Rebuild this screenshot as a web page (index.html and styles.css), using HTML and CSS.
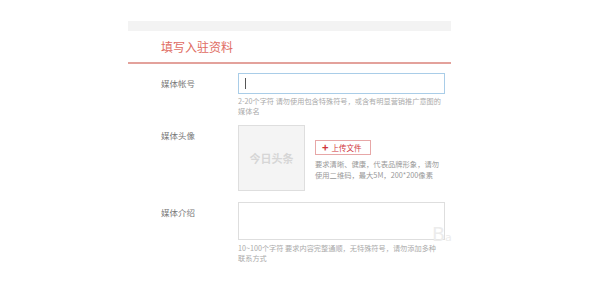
FILE: index.html
```html
<!DOCTYPE html>
<html lang="zh-CN">
<head>
    <meta charset="UTF-8">
    <title>填写入驻资料</title>
    <link rel="stylesheet" href="styles.css">
</head>
<body>
    <div class="panel">
        <div class="top-strip"></div>
        <h2 class="panel-title">填写入驻资料</h2>

        <div class="form-row account-row">
            <label class="form-label">媒体帐号</label>
            <div class="form-field">
                <div class="text-input focused"><span class="caret"></span></div>
                <p class="hint">2-20个字符 请勿使用包含特殊符号，或含有明显营销推广意图的<br>媒体名</p>
            </div>
        </div>

        <div class="form-row avatar-row">
            <label class="form-label">媒体头像</label>
            <div class="form-field avatar-field">
                <div class="avatar-box">今日头条</div>
                <div class="avatar-side">
                    <span class="upload-button"><b>+</b> 上传文件</span>
                    <p class="hint dark">要求清晰、健康，代表品牌形象，请勿<br>使用二维码，最大5M，200*200像素</p>
                </div>
            </div>
        </div>

        <div class="form-row intro-row">
            <label class="form-label">媒体介绍</label>
            <div class="form-field">
                <div class="text-area"></div>
                <p class="hint">10~100个字符 要求内容完整通顺，无特殊符号，请勿添加多种<br>联系方式</p>
            </div>
        </div>

        <div class="watermark">B<span>a</span></div>
    </div>
</body>
</html>
```

FILE: styles.css
```css
* {
    margin: 0;
    padding: 0;
    box-sizing: border-box;
}
body {
    background-color: #fff;
    font-family: "Noto Sans CJK SC", "Liberation Sans", sans-serif;
    color: #666;
}
.panel {
    position: relative;
    width: 323px;
    margin: 21px 0 0 128px;
}
.top-strip {
    height: 10px;
    background-color: #f3f3f3;
}
.panel-title {
    font-size: 12px;
    font-weight: normal;
    color: #e06b61;
    line-height: 16px;
    padding: 8px 0 7px 33px;
    border-bottom: 2px solid #e3a19b;
}
.form-row {
    display: flex;
    padding-left: 33px;
}
.account-row {
    margin-top: 9px;
}
.form-label {
    width: 77px;
    flex: none;
    font-size: 8.5px;
    color: #777;
    line-height: 12px;
    padding-top: 4px;
}
.form-field {
    width: 207px;
}
.text-input {
    height: 21px;
    border: 1px solid #a9cde8;
    padding: 4px 6px;
}
.caret {
    display: block;
    width: 1px;
    height: 11px;
    background-color: #555;
}
.hint {
    font-size: 7.2px;
    line-height: 10px;
    color: #aaa;
    margin-top: 2px;
}
.hint.dark {
    color: #999;
    font-size: 7.3px;
    line-height: 11px;
    margin-top: 4px;
}
.avatar-row {
    margin-top: 9px;
}
.avatar-field {
    display: flex;
    gap: 10px;
}
.avatar-box {
    width: 67px;
    height: 66px;
    flex: none;
    border: 1px solid #dedede;
    background-color: #f4f4f4;
    color: #d6d6d6;
    font-size: 11px;
    font-weight: bold;
    display: flex;
    align-items: center;
    justify-content: center;
}
.avatar-side {
    padding-top: 15px;
}
.upload-button {
    display: flex;
    width: 56px;
    align-items: center;
    gap: 3px;
    height: 15px;
    padding-left: 6px;
    border: 1px solid #e7a7a7;
    color: #d0343a;
    font-size: 7.5px;
}
.upload-button b {
    font-size: 11px;
    line-height: 11px;
}
.intro-row {
    margin-top: 11px;
}
.text-area {
    height: 38px;
    border: 1px solid #dedede;
}
.intro-row .hint {
    margin-top: 3px;
}
.watermark {
    position: absolute;
    left: 304px;
    top: 204px;
    font-family: "DejaVu Sans", sans-serif;
    font-size: 19px;
    color: #ececec;
    line-height: 19px;
}
.watermark span {
    font-size: 11px;
}
```
